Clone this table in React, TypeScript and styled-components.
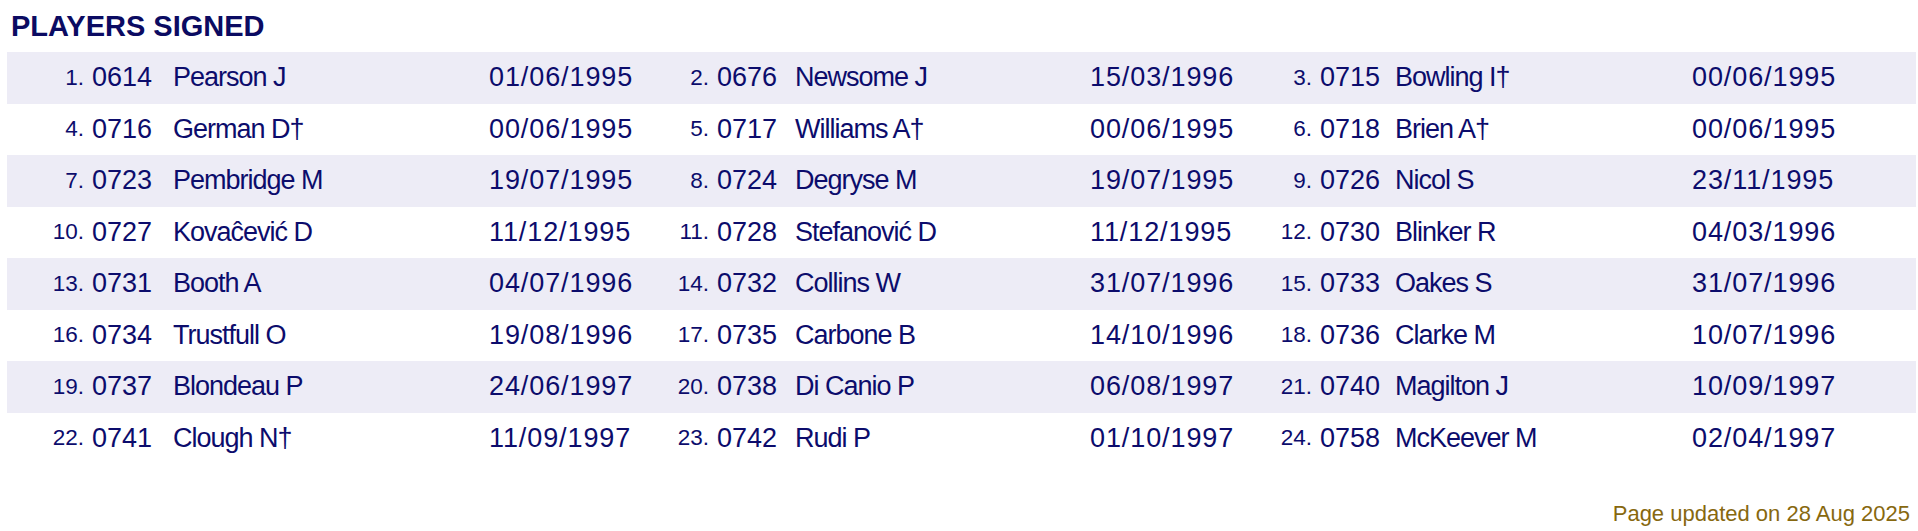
import React from 'react'
import styled, { createGlobalStyle } from 'styled-components'

interface Signing {
  no: number
  code: string
  name: string
  date: string
}

const signings: Signing[] = [
  { no: 1, code: '0614', name: 'Pearson J', date: '01/06/1995' },
  { no: 2, code: '0676', name: 'Newsome J', date: '15/03/1996' },
  { no: 3, code: '0715', name: 'Bowling I†', date: '00/06/1995' },
  { no: 4, code: '0716', name: 'German D†', date: '00/06/1995' },
  { no: 5, code: '0717', name: 'Williams A†', date: '00/06/1995' },
  { no: 6, code: '0718', name: 'Brien A†', date: '00/06/1995' },
  { no: 7, code: '0723', name: 'Pembridge M', date: '19/07/1995' },
  { no: 8, code: '0724', name: 'Degryse M', date: '19/07/1995' },
  { no: 9, code: '0726', name: 'Nicol S', date: '23/11/1995' },
  { no: 10, code: '0727', name: 'Kovaĉević D', date: '11/12/1995' },
  { no: 11, code: '0728', name: 'Stefanović D', date: '11/12/1995' },
  { no: 12, code: '0730', name: 'Blinker R', date: '04/03/1996' },
  { no: 13, code: '0731', name: 'Booth A', date: '04/07/1996' },
  { no: 14, code: '0732', name: 'Collins W', date: '31/07/1996' },
  { no: 15, code: '0733', name: 'Oakes S', date: '31/07/1996' },
  { no: 16, code: '0734', name: 'Trustfull O', date: '19/08/1996' },
  { no: 17, code: '0735', name: 'Carbone B', date: '14/10/1996' },
  { no: 18, code: '0736', name: 'Clarke M', date: '10/07/1996' },
  { no: 19, code: '0737', name: 'Blondeau P', date: '24/06/1997' },
  { no: 20, code: '0738', name: 'Di Canio P', date: '06/08/1997' },
  { no: 21, code: '0740', name: 'Magilton J', date: '10/09/1997' },
  { no: 22, code: '0741', name: 'Clough N†', date: '11/09/1997' },
  { no: 23, code: '0742', name: 'Rudi P', date: '01/10/1997' },
  { no: 24, code: '0758', name: 'McKeever M', date: '02/04/1997' },
]

// three signings per row
const rows: Signing[][] = []
for (let i = 0; i < signings.length; i += 3) rows.push(signings.slice(i, i + 3))

const GlobalStyle = createGlobalStyle`
  body {
    margin: 0;
    background: #fff;
    font-family: "Liberation Sans", Arial, sans-serif;
  }
`

export default function App() {
  return (
    <>
      <GlobalStyle />
      <S.Page>
        <S.Heading>PLAYERS SIGNED</S.Heading>
        <S.Table>
          {rows.map((row, i) => (
            <S.Row key={`row-${i}`} $shaded={i % 2 === 0}>
              {row.map(s => (
                <React.Fragment key={`signing-${s.no}`}>
                  <S.Num>{s.no}.</S.Num>
                  <S.Code>{s.code}</S.Code>
                  <S.Name>{s.name}</S.Name>
                  <S.Date>{s.date}</S.Date>
                </React.Fragment>
              ))}
            </S.Row>
          ))}
        </S.Table>
        <S.Updated>Page updated on 28 Aug 2025</S.Updated>
      </S.Page>
    </>
  )
}

export const S = {
  Page: styled.div`
    display: flex;
    flex-direction: column;
    padding: 10px 2px 0 7px;
    color: #0c0c6c;
  `,
  Heading: styled.h2`
    margin: 0 0 9px 4px;
    font-size: 29px;
    line-height: 33px;
    font-weight: 700;
    color: #0b0b62;
  `,
  Table: styled.div`
    display: flex;
    flex-direction: column;
  `,
  Row: styled.div<{ $shaded: boolean }>`
    display: grid;
    grid-template-columns: 85px 81px 316px 151px 77px 78px 295px 150px 80px 75px 297px 1fr;
    align-items: center;
    height: 51.5px;
    background: ${p => (p.$shaded ? '#edecf6' : 'transparent')};
  `,
  Num: styled.div`
    font-size: 22.5px;
    text-align: right;
    padding-right: 8px;
  `,
  Code: styled.div`
    font-size: 27px;
  `,
  Name: styled.div`
    font-size: 27px;
    letter-spacing: -1px;
    white-space: nowrap;
  `,
  Date: styled.div`
    font-size: 27px;
    letter-spacing: 0.9px;
  `,
  Updated: styled.div`
    margin: 37px 6px 0 0;
    align-self: flex-end;
    font-size: 22px;
    color: #87680f;
  `,
}
